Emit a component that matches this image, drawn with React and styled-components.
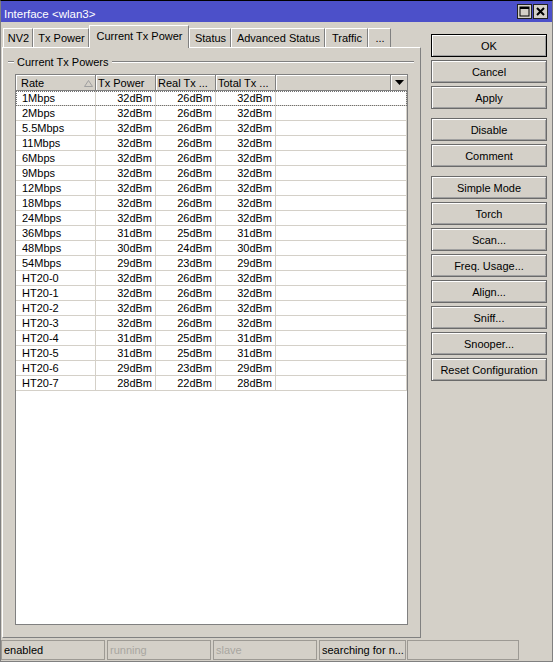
import React from 'react';
import styled, { createGlobalStyle } from 'styled-components';

const Global = createGlobalStyle`
  html, body { margin: 0; padding: 0; background: #d4d0c8; }
  * { box-sizing: border-box; }
  body { font-family: "Liberation Sans", Arial, sans-serif; font-size: 11px; color: #000; }
`;

const Window = styled.div`
  width: 553px;
  height: 662px;
  display: flex;
  flex-direction: column;
  background: #d4d0c8;
  border: 1px solid #808080;
  border-top-color: #000;
`;

const TitleBar = styled.div`
  flex: none;
  height: 21px;
  background: #4c50c9;
  color: #fff;
  display: flex;
  align-items: center;
  justify-content: space-between;
  padding: 0 4px 0 3px;
`;

const TitleText = styled.span`
  font-size: 11.5px;
  margin-top: 4px;
`;

const TitleButtons = styled.div`
  display: flex;
  gap: 1px;
`;

const TitleButton = styled.div`
  width: 15px;
  height: 15px;
  background: #d4d0c8;
  border: 1px solid #202020;
  display: flex;
  align-items: center;
  justify-content: center;
`;

const Main = styled.div`
  flex: 1;
  display: flex;
  min-height: 0;
`;

const LeftPane = styled.div`
  width: 419px;
  margin-left: 1px;
  padding-bottom: 1px;
  display: flex;
  flex-direction: column;
`;

const TabStrip = styled.div`
  flex: none;
  height: 25px;
  display: flex;
  align-items: flex-end;
  padding-left: 1px;
  position: relative;
  z-index: 1;
`;

const Tab = styled.div`
  width: ${p => p.$w}px;
  height: ${p => (p.$active ? 23 : 19)}px;
  margin-bottom: ${p => (p.$active ? -1 : 0)}px;
  background: #d4d0c8;
  border-top: 1px solid #fff;
  border-left: 1px solid #fff;
  border-right: 1px solid #808080;
  display: flex;
  align-items: center;
  justify-content: center;
  padding-left: 1px;
  padding-bottom: ${p => (p.$active ? 3 : 0)}px;
  white-space: nowrap;
`;

const Panel = styled.div`
  flex: 1;
  min-height: 0;
  display: flex;
  flex-direction: column;
  border: 1px solid;
  border-color: #fff #808080 #808080 #fff;
  padding: 7px 6px 12px 5px;
  position: relative;
  z-index: 0;
`;

const GroupHeader = styled.div`
  flex: none;
  height: 13px;
  display: flex;
  align-items: center;
  gap: 3px;
`;

const Etch = styled.div`
  width: ${p => (p.$grow ? 'auto' : '6px')};
  flex: ${p => (p.$grow ? 1 : 'none')};
  height: 2px;
  border-top: 1px solid #808080;
  border-bottom: 1px solid #fff;
`;

const Table = styled.div`
  flex: 1;
  margin: 6px 6px 0 7px;
  background: #fff;
  border: 1px solid #808080;
  display: flex;
  flex-direction: column;
  min-height: 0;
`;

const cols = '80px 60px 60px 60px 1fr';

const HeaderRow = styled.div`
  flex: none;
  display: grid;
  grid-template-columns: ${cols} 16px;
  height: 16px;
  background: #d4d0c8;
`;

const HeaderCell = styled.div`
  position: relative;
  display: flex;
  align-items: center;
  padding-left: ${p => (p.$first ? 5 : 2)}px;
  border-right: 1px solid #808080;
  border-bottom: 1px solid #808080;
  box-shadow: inset 1px 1px #fff;
  white-space: nowrap;
  overflow: hidden;
`;

const MenuCell = styled.div`
  display: flex;
  align-items: center;
  justify-content: center;
  border-bottom: 1px solid #808080;
  box-shadow: inset 1px 1px #fff;
`;

const SortMark = styled.svg`
  position: absolute;
  right: 2px;
  top: 5px;
`;

const Row = styled.div`
  display: grid;
  grid-template-columns: ${cols};
  height: 15px;
  outline: ${p => (p.$focus ? '1px dotted #707070' : 'none')};
  outline-offset: -1px;
`;

const Cell = styled.div`
  display: flex;
  align-items: center;
  justify-content: ${p => (p.$right ? 'flex-end' : 'flex-start')};
  padding: 0 3px 0 ${p => (p.$right ? 0 : 6)}px;
  border-right: 1px solid #d4d0c8;
  border-bottom: 1px solid #d4d0c8;
  white-space: nowrap;
`;

const RightPane = styled.div`
  width: 116px;
  margin-left: 10px;
  padding-top: 12px;
  display: flex;
  flex-direction: column;
  gap: 9px;
`;

const ButtonGroup = styled.div`
  display: flex;
  flex-direction: column;
  gap: 3px;
`;

const Button = styled.div`
  height: 23px;
  display: flex;
  align-items: center;
  justify-content: center;
  background: #d4d0c8;
  border: 1px solid ${p => (p.$default ? '#000' : '#6a6a6a')};
  box-shadow: inset 1px 1px #fff, inset -1px -1px #a0a0a0;
  white-space: nowrap;
`;

const StatusBar = styled.div`
  flex: none;
  height: 22px;
  padding: 1px 0;
  display: flex;
  gap: 2px;
`;

const StatusCell = styled.div`
  width: ${p => p.$w}px;
  margin-right: ${p => p.$mr || 0}px;
  height: 20px;
  border: 1px solid #9d9a94;
  display: flex;
  align-items: center;
  padding-left: 2px;
  color: ${p => (p.$disabled ? '#a8a6a0' : '#000')};
  white-space: nowrap;
  overflow: hidden;
`;

const rows = [
  ['1Mbps', '32dBm', '26dBm', '32dBm'],
  ['2Mbps', '32dBm', '26dBm', '32dBm'],
  ['5.5Mbps', '32dBm', '26dBm', '32dBm'],
  ['11Mbps', '32dBm', '26dBm', '32dBm'],
  ['6Mbps', '32dBm', '26dBm', '32dBm'],
  ['9Mbps', '32dBm', '26dBm', '32dBm'],
  ['12Mbps', '32dBm', '26dBm', '32dBm'],
  ['18Mbps', '32dBm', '26dBm', '32dBm'],
  ['24Mbps', '32dBm', '26dBm', '32dBm'],
  ['36Mbps', '31dBm', '25dBm', '31dBm'],
  ['48Mbps', '30dBm', '24dBm', '30dBm'],
  ['54Mbps', '29dBm', '23dBm', '29dBm'],
  ['HT20-0', '32dBm', '26dBm', '32dBm'],
  ['HT20-1', '32dBm', '26dBm', '32dBm'],
  ['HT20-2', '32dBm', '26dBm', '32dBm'],
  ['HT20-3', '32dBm', '26dBm', '32dBm'],
  ['HT20-4', '31dBm', '25dBm', '31dBm'],
  ['HT20-5', '31dBm', '25dBm', '31dBm'],
  ['HT20-6', '29dBm', '23dBm', '29dBm'],
  ['HT20-7', '28dBm', '22dBm', '28dBm'],
];

const tabs = [
  ['NV2', 30],
  ['Tx Power', 56],
  ['Current Tx Power', 100, true],
  ['Status', 42],
  ['Advanced Status', 94],
  ['Traffic', 43],
  ['...', 23],
];

const buttonGroups = [
  [['OK', true], ['Cancel'], ['Apply']],
  [['Disable'], ['Comment']],
  [['Simple Mode'], ['Torch'], ['Scan...'], ['Freq. Usage...'], ['Align...'], ['Sniff...'], ['Snooper...'], ['Reset Configuration']],
];

export default function App() {
  return (
    <>
      <Global />
      <Window>
        <TitleBar>
          <TitleText>Interface &lt;wlan3&gt;</TitleText>
          <TitleButtons>
            <TitleButton>
              <svg width="11" height="11" viewBox="0 0 11 11">
                <rect x="1" y="1" width="9" height="9" fill="none" stroke="#000" strokeWidth="1" />
                <rect x="1" y="1" width="9" height="2" fill="#000" />
              </svg>
            </TitleButton>
            <TitleButton>
              <svg width="11" height="11" viewBox="0 0 11 11">
                <path d="M2 2 L9 9 M9 2 L2 9" stroke="#000" strokeWidth="2" />
              </svg>
            </TitleButton>
          </TitleButtons>
        </TitleBar>
        <Main>
          <LeftPane>
            <TabStrip>
              {tabs.map(([t, w, a]) => (
                <Tab key={t} $w={w} $active={a}>{t}</Tab>
              ))}
            </TabStrip>
            <Panel>
              <GroupHeader>
                <Etch />
                <span>Current Tx Powers</span>
                <Etch $grow />
              </GroupHeader>
              <Table>
                <HeaderRow>
                  <HeaderCell $first>
                    Rate
                    <SortMark width="9" height="7" viewBox="0 0 9 7">
                      <path d="M4.5 0.5 L8.5 6.5 L0.5 6.5 Z" fill="none" stroke="#a0a0a0" strokeWidth="1" />
                    </SortMark>
                  </HeaderCell>
                  <HeaderCell>Tx Power</HeaderCell>
                  <HeaderCell>Real Tx ...</HeaderCell>
                  <HeaderCell>Total Tx ...</HeaderCell>
                  <HeaderCell />
                  <MenuCell>
                    <svg width="9" height="5" viewBox="0 0 9 5">
                      <path d="M0 0 L9 0 L4.5 5 Z" fill="#000" />
                    </svg>
                  </MenuCell>
                </HeaderRow>
                {rows.map((r, i) => (
                  <Row key={r[0]} $focus={i === 0}>
                    <Cell>{r[0]}</Cell>
                    <Cell $right>{r[1]}</Cell>
                    <Cell $right>{r[2]}</Cell>
                    <Cell $right>{r[3]}</Cell>
                    <Cell />
                  </Row>
                ))}
              </Table>
            </Panel>
          </LeftPane>
          <RightPane>
            {buttonGroups.map((g, gi) => (
              <ButtonGroup key={gi}>
                {g.map(([label, def]) => (
                  <Button key={label} $default={def}>{label}</Button>
                ))}
              </ButtonGroup>
            ))}
          </RightPane>
        </Main>
        <StatusBar>
          <StatusCell $w={104}>enabled</StatusCell>
          <StatusCell $w={104} $disabled>running</StatusCell>
          <StatusCell $w={104} $disabled>slave</StatusCell>
          <StatusCell $w={87} $mr={-1}>searching for n...</StatusCell>
          <StatusCell $w={112}></StatusCell>
        </StatusBar>
      </Window>
    </>
  );
}
